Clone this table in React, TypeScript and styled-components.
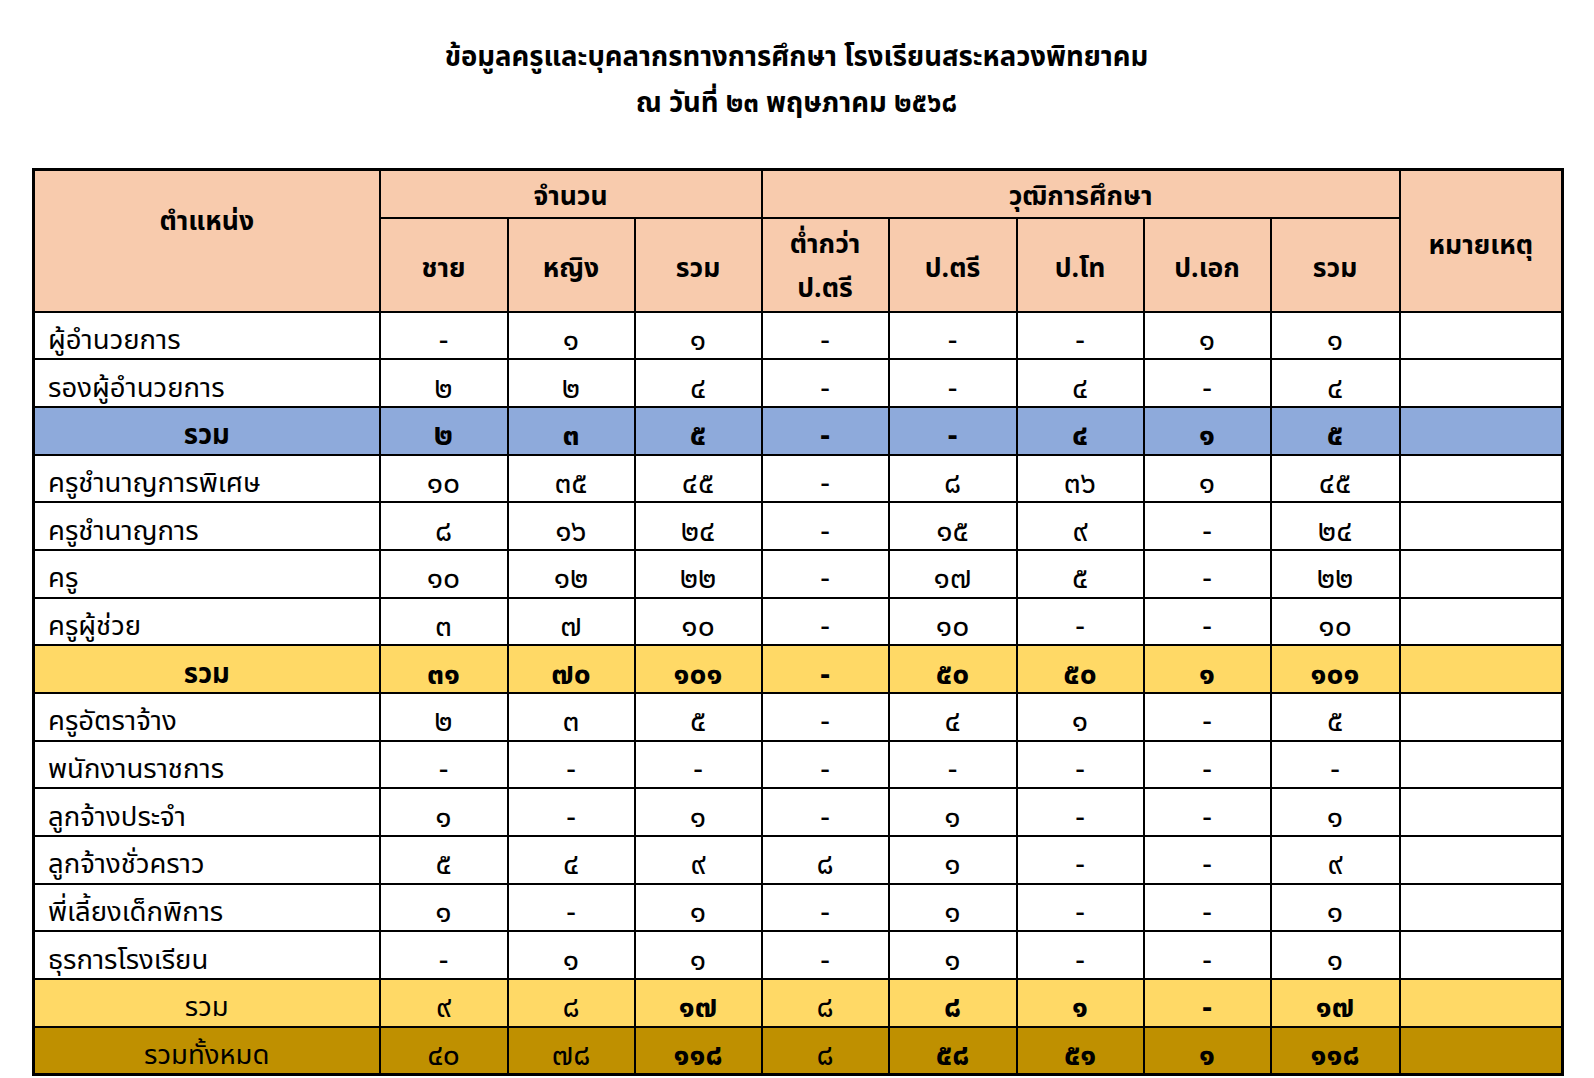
import React from "react";
import styled, { createGlobalStyle } from "styled-components";

const Global = createGlobalStyle`
  html, body { margin: 0; padding: 0; background: #ffffff; }
  body { font-family: "Leelawadee UI", "Noto Sans Thai", "Noto Sans Thai UI", Tahoma, "Noto Sans", "DejaVu Sans", sans-serif; color: #000; }
`;

const Page = styled.div`
  width: 1594px;
  padding: 35px 33px 0 32px;
  box-sizing: border-box;
`;

const Title = styled.h1`
  margin: 0;
  text-align: center;
  font-size: 27.5px;
  font-weight: 700;
  line-height: 46px;
`;

const Sheet = styled.table`
  margin-top: 41px;
  width: 1529px;
  border-collapse: collapse;
  border: 3px solid #000;
  table-layout: fixed;
`;

type Tone = "plain" | "blue" | "yellow" | "brown";
const tones: Record<Tone, string> = {
  plain: "#ffffff",
  blue: "#8eaadb",
  yellow: "#ffd966",
  brown: "#bf9000",
};

const HeadRow = styled.tr<{ $h: number }>`
  height: ${(p) => p.$h}px;
`;

const HeadCell = styled.th<{ $pad?: string; $lh?: number }>`
  background: #f8cbad;
  border: 2px solid #000;
  font-weight: 700;
  font-size: 26.5px;
  text-align: center;
  vertical-align: middle;
  padding: ${(p) => p.$pad ?? "0"};
  line-height: ${(p) => p.$lh ?? 38}px;
  white-space: nowrap;
`;

const BodyRow = styled.tr<{ $tone: Tone }>`
  height: 47.7px;
  background: ${(p) => tones[p.$tone]};
`;

const LabelCell = styled.td<{ $center?: boolean; $bold?: boolean }>`
  border: 2px solid #000;
  padding: 10px 0 0 ${(p) => (p.$center ? "0" : "13px")};
  text-align: ${(p) => (p.$center ? "center" : "left")};
  font-weight: ${(p) => (p.$bold ? 700 : 400)};
  font-size: 27.5px;
  line-height: 33px;
  white-space: nowrap;
`;

const NumCell = styled.td<{ $bold?: boolean }>`
  border: 2px solid #000;
  padding: 12px 0 0 0;
  text-align: center;
  font-weight: ${(p) => (p.$bold ? 700 : 400)};
  font-size: 30px;
  line-height: 31px;
`;

type RowDef = { label: string; tone: Tone; center?: boolean; bold?: boolean; cells: string[] };

const rows: RowDef[] = [
  { label: "ผู้อำนวยการ", tone: "plain", cells: ["-", "๑", "๑", "-", "-", "-", "๑", "๑"] },
  { label: "รองผู้อำนวยการ", tone: "plain", cells: ["๒", "๒", "๔", "-", "-", "๔", "-", "๔"] },
  { label: "รวม", tone: "blue", center: true, bold: true, cells: ["*๒", "*๓", "*๕", "*-", "*-", "*๔", "*๑", "*๕"] },
  { label: "ครูชำนาญการพิเศษ", tone: "plain", cells: ["๑๐", "๓๕", "๔๕", "-", "๘", "๓๖", "๑", "๔๕"] },
  { label: "ครูชำนาญการ", tone: "plain", cells: ["๘", "๑๖", "๒๔", "-", "๑๕", "๙", "-", "๒๔"] },
  { label: "ครู", tone: "plain", cells: ["๑๐", "๑๒", "๒๒", "-", "๑๗", "๕", "-", "๒๒"] },
  { label: "ครูผู้ช่วย", tone: "plain", cells: ["๓", "๗", "๑๐", "-", "๑๐", "-", "-", "๑๐"] },
  { label: "รวม", tone: "yellow", center: true, bold: true, cells: ["*๓๑", "*๗๐", "*๑๐๑", "*-", "*๕๐", "*๕๐", "*๑", "*๑๐๑"] },
  { label: "ครูอัตราจ้าง", tone: "plain", cells: ["๒", "๓", "๕", "-", "๔", "๑", "-", "๕"] },
  { label: "พนักงานราชการ", tone: "plain", cells: ["-", "-", "-", "-", "-", "-", "-", "-"] },
  { label: "ลูกจ้างประจำ", tone: "plain", cells: ["๑", "-", "๑", "-", "๑", "-", "-", "๑"] },
  { label: "ลูกจ้างชั่วคราว", tone: "plain", cells: ["๕", "๔", "๙", "๘", "๑", "-", "-", "๙"] },
  { label: "พี่เลี้ยงเด็กพิการ", tone: "plain", cells: ["๑", "-", "๑", "-", "๑", "-", "-", "๑"] },
  { label: "ธุรการโรงเรียน", tone: "plain", cells: ["-", "๑", "๑", "-", "๑", "-", "-", "๑"] },
  { label: "รวม", tone: "yellow", center: true, cells: ["๙", "๘", "*๑๗", "๘", "*๘", "*๑", "*-", "*๑๗"] },
  { label: "รวมทั้งหมด", tone: "brown", center: true, cells: ["๔๐", "๗๘", "*๑๑๘", "๘", "*๕๘", "*๕๑", "*๑", "*๑๑๘"] },
];

const Col = styled.col<{ $w: number }>`
  width: ${(p) => p.$w}px;
`;

const widths = [346, 128, 127, 127, 127, 128, 127, 127, 129, 163];

const subHeads = ["ชาย", "หญิง", "รวม"];
const degreeHeads = ["ป.ตรี", "ป.โท", "ป.เอก", "รวม"];

export default function App() {
  return (
    <Page>
      <Global />
      <Title>
        ข้อมูลครูและบุคลากรทางการศึกษา โรงเรียนสระหลวงพิทยาคม
        <br />
        ณ วันที่ ๒๓ พฤษภาคม ๒๕๖๘
      </Title>
      <Sheet>
        <colgroup>
          {widths.map((w, i) => (
            <Col key={i} $w={w} />
          ))}
        </colgroup>
        <thead>
          <HeadRow $h={48}>
            <HeadCell rowSpan={2} $pad="0 0 38px 0" $lh={40}>
              ตำแหน่ง
            </HeadCell>
            <HeadCell colSpan={3} $pad="6px 0 0 0">
              จำนวน
            </HeadCell>
            <HeadCell colSpan={5} $pad="6px 0 0 0">
              วุฒิการศึกษา
            </HeadCell>
            <HeadCell rowSpan={2} $pad="10px 0 0 0" $lh={40}>
              หมายเหตุ
            </HeadCell>
          </HeadRow>
          <HeadRow $h={94}>
            {subHeads.map((h, i) => (
              <HeadCell key={i} $pad="8px 0 0 0" $lh={40}>
                {h}
              </HeadCell>
            ))}
            <HeadCell $pad="4px 0 0 0" $lh={44}>
              ต่ำกว่า
              <br />
              ป.ตรี
            </HeadCell>
            {degreeHeads.map((h, i) => (
              <HeadCell key={i} $pad="8px 0 0 0" $lh={40}>
                {h}
              </HeadCell>
            ))}
          </HeadRow>
        </thead>
        <tbody>
          {rows.map((r, i) => (
            <BodyRow key={i} $tone={r.tone}>
              <LabelCell $center={r.center} $bold={r.bold}>
                {r.label}
              </LabelCell>
              {r.cells.map((c, j) => {
                const bold = c.startsWith("*");
                return (
                  <NumCell key={j} $bold={bold}>
                    {bold ? c.slice(1) : c}
                  </NumCell>
                );
              })}
              <NumCell />
            </BodyRow>
          ))}
        </tbody>
      </Sheet>
    </Page>
  );
}
